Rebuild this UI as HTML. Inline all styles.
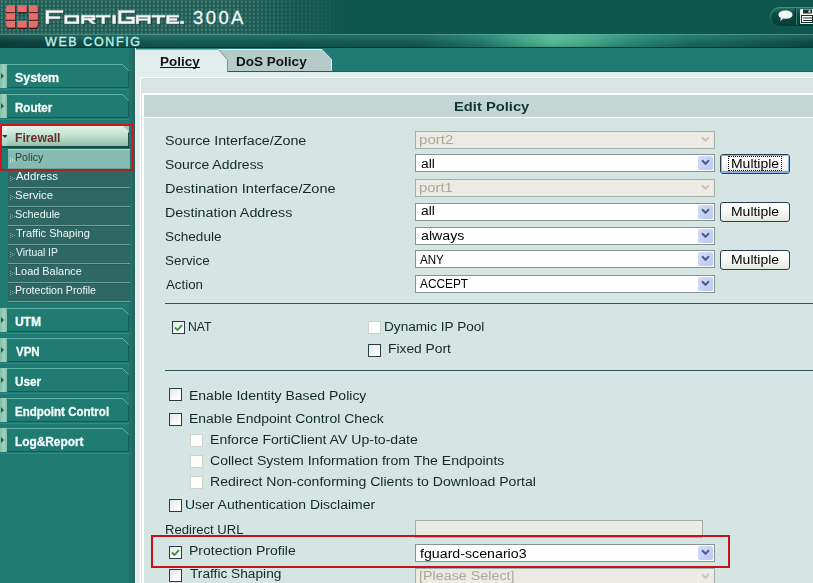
<!DOCTYPE html>
<html><head><meta charset="utf-8">
<style>
*{margin:0;padding:0;box-sizing:border-box}
html,body{width:813px;height:583px;overflow:hidden;background:#d5e5e3;font-family:"Liberation Sans",sans-serif}
.a{position:absolute}
.tx{position:absolute;white-space:nowrap;transform-origin:0 0}
#hdr{left:0;top:0;width:813px;height:34px;background:#0f564e}
#grid{left:0;top:0;width:400px;height:34px;background-color:#1d564e;
 background-image:radial-gradient(circle at 2px 2px,rgba(110,175,162,.6) 0,rgba(110,175,162,.35) 0.9px,rgba(110,175,162,0) 1.8px),linear-gradient(90deg,rgba(110,175,162,.12) 1px,transparent 1px),linear-gradient(0deg,rgba(110,175,162,.12) 1px,transparent 1px);
 background-size:4px 4px,4px 4px,4px 4px;background-position:0 0,1px 0,0 1px;
 -webkit-mask-image:linear-gradient(90deg,#000 0,#000 230px,rgba(0,0,0,.45) 290px,transparent 350px)}
#band{left:0;top:34px;width:813px;height:14px;
 background:linear-gradient(180deg,rgba(120,200,180,.2) 0,rgba(120,200,180,.1) 35%,rgba(120,200,180,0) 55%,rgba(0,0,0,.15) 100%),linear-gradient(90deg,#0c3f3a 0,#0f4741 40px,#145a52 150px,#135a52 300px,#145c54 420px,#22786a 480px,#3fa585 525px,#55b996 552px,#47ad8c 585px,#2a8a74 630px,#196d62 690px,#135a52 760px,#0f4b45 813px)}
#band .hl{position:absolute;left:0;top:0;width:813px;height:1px;background:rgba(110,190,170,.45)}
#band .dk{position:absolute;left:0;bottom:0;width:813px;height:1px;background:#0a3a35}
#side{left:0;top:48px;width:135px;height:535px;background:#1f7a74}
#sideR{left:129px;top:48px;width:6px;height:535px;background:linear-gradient(90deg,#1f7770,#226b65 70%,#2a5f5a)}
#content{left:135px;top:48px;width:678px;height:535px;background:#d5e5e3}
.btn{position:absolute;left:0;width:130px;height:24px}
.btn:after{content:"";position:absolute;left:0;top:25px;width:129px;height:1px;background:rgba(80,170,160,.35)}
.btn .strip{position:absolute;left:0;top:0;width:7px;height:24px;background:linear-gradient(90deg,#7fbea8,#9fd3bf 60%,#7fbba6)}
.btn .strip i{position:absolute;left:1px;top:9px;width:0;height:0;border-top:3px solid transparent;border-bottom:3px solid transparent;border-left:3px solid #2a5a50}
.btn svg{position:absolute;left:7px;top:0}
.sub{position:absolute;left:8px;width:122px;height:19px;background:#2f6762}
.sub .sep{position:absolute;left:0;top:0;width:122px;height:1px;background:#6aa49d}
.sub .sep:after{content:"";position:absolute;left:0;top:1px;width:122px;height:1px;background:#2a5a55}
.sub .ar{position:absolute;left:2px;top:8px}
.tab{position:absolute}
</style></head><body>
<div id="hdr" class="a"></div>
<div id="grid" class="a"></div>
<!-- logo squares -->
<svg class="a" style="left:5px;top:4px" width="36" height="26" viewBox="0 0 36 26">
 <defs><g id="lg">
  <path d="M2.5 1.5h7.5v6.5H1.2v-4z"/><path d="M12.3 1.5h9.4v6.5h-9.4z"/><path d="M24 1.5h7.5l1.3 2.5v4H24z"/>
  <path d="M1.2 9.3h8.8v6.4H1.2z"/><path d="M24 9.3h8.8v6.4H24z"/>
  <path d="M1.2 17h8.8v6.5H2.5l-1.3-2.5z"/><path d="M12.3 17h9.4v6.5h-9.4z"/><path d="M24 17h8.8v4l-1.3 2.5H24z"/>
 </g></defs>
 <use href="#lg" x="0.3" y="1" fill="#3c0e0e" stroke="#3c0e0e" stroke-width="0.9"/>
 <use href="#lg" fill="#e56d6b"/>
 <use href="#lg" fill="none" stroke="#f59a94" stroke-width="0.5" opacity=".5"/>
</svg>
<!-- FortiGate text -->
<svg class="a" style="left:44px;top:9px" width="142" height="17" viewBox="0 0 142 17">
 <g id="fg">
  <path d="M2 1.4H19V3.8H4.8V7.6H16V9.8H4.8V14.7H2Z"/>
  <path d="M20.6 6.3H35V14.7H20.6ZM23.2 8.3V12.7H32.4V8.3Z" fill-rule="evenodd"/>
  <path d="M37.3 6.3H51.1V11H47.5L51.6 14.7H48L44 11H40V14.7H37.3ZM40 8.2V9.2H48.5V8.2Z" fill-rule="evenodd"/>
  <path d="M52.1 6.3H66.4V8.3H60.6V14.7H57.9V8.3H52.1Z"/>
  <path d="M68.6 6.3H71.6V14.7H68.6Z"/>
  <path d="M74.4 1.4H90.6V3.8H77.2V12.3H88V10.2H82.5V8H90.6V14.7H74.4Z"/>
  <path d="M92.1 6.3H106.4V14.7H103.8V11.6H94.7V14.7H92.1ZM94.7 8.3V9.7H103.8V8.3Z" fill-rule="evenodd"/>
  <path d="M107.8 6.3H121.1V8.3H115.8V14.7H113.1V8.3H107.8Z"/>
  <path d="M122.6 6.3H134.9V8.3H125.2V9.6H133V11.4H125.2V12.7H134.9V14.7H122.6Z"/>
  <path d="M136.4 12.2H139.8V14.7H136.4Z"/>
 </g>
 <use href="#fg" x="0.9" y="0.9" fill="#0a2a26" stroke="#0a2a26" stroke-width="0.5" opacity=".7"/>
 <use href="#fg" fill="#f2f8f6" stroke="#f2f8f6" stroke-width="0.5"/>
</svg>
<div class="tx" style="left:193px;top:9px;font-size:18.5px;line-height:18px;color:#eef6f4;letter-spacing:2.4px;-webkit-text-stroke:0.3px #eef6f4">300A</div>

<!-- top-right pill -->
<div class="a" style="left:770px;top:7px;width:60px;height:19px;border-radius:10px 0 0 10px;background:linear-gradient(180deg,#2a7068,#0b4a42 40%,#083c36);box-shadow:inset 1px 1px 1px rgba(140,200,190,.35)"></div>
<div class="a" style="left:795px;top:8px;width:1px;height:17px;background:#062e29"></div>
<div class="a" style="left:796px;top:8px;width:1px;height:17px;background:#3d8179"></div>
<svg class="a" style="left:778px;top:10px" width="15" height="12" viewBox="0 0 15 12"><path d="M7.5 0.5C11.5 0.5 14.5 2.3 14.5 4.7S11.5 8.8 7.5 8.8C6.8 8.8 6.2 8.7 5.6 8.6L2 11 3 8C1.4 7.3 0.5 6.1 0.5 4.7 0.5 2.3 3.5 0.5 7.5 0.5z" fill="#f2f6f4"/></svg>
<svg class="a" style="left:800px;top:9px" width="13" height="15" viewBox="0 0 13 15"><path d="M0.5 0.5h13v14h-13z" fill="#f4f8f6" stroke="#dfe8e6" stroke-width="1"/><rect x="3" y="0.5" width="9" height="4" fill="#1c2e2b"/><rect x="8.5" y="1.5" width="2" height="2" fill="#f4f8f6"/><rect x="1.5" y="6.5" width="11" height="7" fill="#ffffff" stroke="#1c2e2b" stroke-width="1"/><path d="M3 9h9M3 11.5h9" stroke="#1c2e2b" stroke-width="1"/></svg>

<div id="band" class="a"><div class="hl"></div><div class="dk"></div></div>
<div class="tx" style="left:45px;top:35.6px;font-size:12.5px;line-height:12.5px;color:#bdf0e6;-webkit-text-stroke:0.35px #bdf0e6;letter-spacing:1.6px">WEB CONFIG</div>

<div id="side" class="a"></div>
<div id="sideR" class="a"></div>

<!-- main sidebar buttons -->
<div class="btn" style="top:64px"><div class="strip"><i></i></div><svg width="122" height="24"><path d="M0 0.5H115.5L121.5 6.5V23.5" fill="none" stroke="#56aba0"/><path d="M0 1H115L121 7V23H0z" fill="#207b73"/><path d="M0 0.5H115.5L121.5 6.5" fill="none" stroke="#5db3a7"/><path d="M0 23.5H121.5V7" fill="none" stroke="#185c56"/></svg></div>
<div class="btn" style="top:94px"><div class="strip"><i></i></div><svg width="122" height="24"><path d="M0 1H115L121 7V23H0z" fill="#207b73"/><path d="M0 0.5H115.5L121.5 6.5" fill="none" stroke="#5db3a7"/><path d="M0 23.5H121.5V7" fill="none" stroke="#185c56"/></svg></div>

<!-- firewall -->
<div class="a" style="left:2px;top:126px;width:6px;height:21px;background:linear-gradient(180deg,#f2fbf6,#c3e3d4 50%,#a6ccb9)"></div>
<div class="a" style="left:2px;top:135px;width:0;height:0;border-left:3px solid transparent;border-right:3px solid transparent;border-top:3px solid #223a34"></div>
<div class="a" style="left:7px;top:126px;width:122px;height:21px;background:linear-gradient(180deg,#e4f3ea 0,#c9e6d7 35%,#a6cfbb 75%,#8cbba5 100%)"></div>
<div class="a" style="left:2px;top:146px;width:127px;height:1px;background:#1b4f4a"></div><div class="a" style="left:2px;top:147px;width:128px;height:1px;background:#174a45"></div>
<div class="a" style="left:128px;top:126px;width:1px;height:21px;background:#1d4f4a"></div><svg class="a" style="left:122px;top:126px" width="7" height="7"><path d="M0 0H7V7z" fill="#9cc9b6"/><path d="M0.5 0L6.5 6" stroke="#f4fbf7" stroke-width="1"/></svg>
<!-- submenu -->
<div class="a" style="left:8px;top:148px;width:122px;height:1px;background:#2a716a"></div>
<div class="sub" style="top:149px;background:#86bbaf;border-top:1px solid #b3d8cc"><svg class="ar" width="7" height="6" viewBox="0 0 7 6"><g fill="#d8f0ea"><rect x="0" y="0" width="1" height="1"/><rect x="0" y="2" width="1" height="1"/><rect x="0" y="4" width="1" height="1"/><rect x="2" y="1" width="1" height="1"/><rect x="2" y="3" width="1" height="1"/><rect x="4" y="2" width="1" height="1"/></g></svg></div>
<div class="sub" style="top:168px"><div class="sep"></div><svg class="ar" width="7" height="6" viewBox="0 0 7 6"><g fill="#7fb3aa"><rect x="0" y="0" width="1" height="1"/><rect x="0" y="2" width="1" height="1"/><rect x="0" y="4" width="1" height="1"/><rect x="2" y="1" width="1" height="1"/><rect x="2" y="3" width="1" height="1"/><rect x="4" y="2" width="1" height="1"/></g></svg></div>
<div class="sub" style="top:187px"><div class="sep"></div><svg class="ar" width="7" height="6" viewBox="0 0 7 6"><g fill="#7fb3aa"><rect x="0" y="0" width="1" height="1"/><rect x="0" y="2" width="1" height="1"/><rect x="0" y="4" width="1" height="1"/><rect x="2" y="1" width="1" height="1"/><rect x="2" y="3" width="1" height="1"/><rect x="4" y="2" width="1" height="1"/></g></svg></div>
<div class="sub" style="top:206px"><div class="sep"></div><svg class="ar" width="7" height="6" viewBox="0 0 7 6"><g fill="#7fb3aa"><rect x="0" y="0" width="1" height="1"/><rect x="0" y="2" width="1" height="1"/><rect x="0" y="4" width="1" height="1"/><rect x="2" y="1" width="1" height="1"/><rect x="2" y="3" width="1" height="1"/><rect x="4" y="2" width="1" height="1"/></g></svg></div>
<div class="sub" style="top:225px"><div class="sep"></div><svg class="ar" width="7" height="6" viewBox="0 0 7 6"><g fill="#7fb3aa"><rect x="0" y="0" width="1" height="1"/><rect x="0" y="2" width="1" height="1"/><rect x="0" y="4" width="1" height="1"/><rect x="2" y="1" width="1" height="1"/><rect x="2" y="3" width="1" height="1"/><rect x="4" y="2" width="1" height="1"/></g></svg></div>
<div class="sub" style="top:244px"><div class="sep"></div><svg class="ar" width="7" height="6" viewBox="0 0 7 6"><g fill="#7fb3aa"><rect x="0" y="0" width="1" height="1"/><rect x="0" y="2" width="1" height="1"/><rect x="0" y="4" width="1" height="1"/><rect x="2" y="1" width="1" height="1"/><rect x="2" y="3" width="1" height="1"/><rect x="4" y="2" width="1" height="1"/></g></svg></div>
<div class="sub" style="top:263px"><div class="sep"></div><svg class="ar" width="7" height="6" viewBox="0 0 7 6"><g fill="#7fb3aa"><rect x="0" y="0" width="1" height="1"/><rect x="0" y="2" width="1" height="1"/><rect x="0" y="4" width="1" height="1"/><rect x="2" y="1" width="1" height="1"/><rect x="2" y="3" width="1" height="1"/><rect x="4" y="2" width="1" height="1"/></g></svg></div>
<div class="sub" style="top:282px"><div class="sep"></div><svg class="ar" width="7" height="6" viewBox="0 0 7 6"><g fill="#7fb3aa"><rect x="0" y="0" width="1" height="1"/><rect x="0" y="2" width="1" height="1"/><rect x="0" y="4" width="1" height="1"/><rect x="2" y="1" width="1" height="1"/><rect x="2" y="3" width="1" height="1"/><rect x="4" y="2" width="1" height="1"/></g></svg></div>
<div class="a" style="left:8px;top:301px;width:122px;height:1px;background:#6aa49d"></div><div class="a" style="left:8px;top:302px;width:122px;height:1px;background:#1f6a64"></div>

<!-- red rect sidebar -->
<div class="a" style="left:0;top:124px;width:134px;height:47px;border:2px solid #d3141a;border-bottom-color:#a52424"></div>

<!-- lower main buttons -->
<div class="btn" style="top:308px"><div class="strip"><i></i></div><svg width="122" height="24"><path d="M0 1H115L121 7V23H0z" fill="#207b73"/><path d="M0 0.5H115.5L121.5 6.5" fill="none" stroke="#5db3a7"/><path d="M0 23.5H121.5V7" fill="none" stroke="#185c56"/></svg></div>
<div class="btn" style="top:338px"><div class="strip"><i></i></div><svg width="122" height="24"><path d="M0 1H115L121 7V23H0z" fill="#207b73"/><path d="M0 0.5H115.5L121.5 6.5" fill="none" stroke="#5db3a7"/><path d="M0 23.5H121.5V7" fill="none" stroke="#185c56"/></svg></div>
<div class="btn" style="top:368px"><div class="strip"><i></i></div><svg width="122" height="24"><path d="M0 1H115L121 7V23H0z" fill="#207b73"/><path d="M0 0.5H115.5L121.5 6.5" fill="none" stroke="#5db3a7"/><path d="M0 23.5H121.5V7" fill="none" stroke="#185c56"/></svg></div>
<div class="btn" style="top:398px"><div class="strip"><i></i></div><svg width="122" height="24"><path d="M0 1H115L121 7V23H0z" fill="#207b73"/><path d="M0 0.5H115.5L121.5 6.5" fill="none" stroke="#5db3a7"/><path d="M0 23.5H121.5V7" fill="none" stroke="#185c56"/></svg></div>
<div class="btn" style="top:428px"><div class="strip"><i></i></div><svg width="122" height="24"><path d="M0 1H115L121 7V23H0z" fill="#207b73"/><path d="M0 0.5H115.5L121.5 6.5" fill="none" stroke="#5db3a7"/><path d="M0 23.5H121.5V7" fill="none" stroke="#185c56"/></svg></div>

<!-- content -->
<div id="content" class="a"></div>
<!-- tab row -->
<div class="a" style="left:135px;top:48px;width:678px;height:23px;background:#1f7a74"></div>
<div class="a" style="left:135px;top:48px;width:1px;height:535px;background:#d8f6f3"></div>
<svg class="a" style="left:136px;top:48px" width="677" height="24" viewBox="0 0 677 24">
 <path d="M0 0H677V24H0z" fill="#1f7a74"/>
 <path d="M0 1.5H82.5L91.5 11.5V24H0z" fill="#e1eeee"/>
 <path d="M82.5 2H186L195.5 12V23H91.5V11.5z" fill="#b5cbc9"/>
 <path d="M82.5 1.5L91.5 11.5V23" fill="none" stroke="#7d9694" stroke-width="1"/>
 <path d="M82.5 1.5H186L195.5 11.5V23" fill="none" stroke="#e6f2f1" stroke-width="1"/>
 <path d="M91.5 23.5H677" stroke="#1a5f58" stroke-width="1"/>
</svg>
<div class="a" style="left:160px;top:67px;width:40px;height:1px;background:#111"></div>
<!-- panel bands -->
<div class="a" style="left:136px;top:72px;width:677px;height:5px;background:#e0eeed"></div>
<div class="a" style="left:136px;top:71px;width:4px;height:512px;background:#e3eded"></div>
<div class="a" style="left:140px;top:77px;width:673px;height:1px;background:#ffffff"></div>
<div class="a" style="left:140px;top:77px;width:1px;height:506px;background:#ffffff"></div>
<div class="a" style="left:141px;top:78px;width:672px;height:15px;background:#d9e5e4"></div>
<div class="a" style="left:141px;top:78px;width:2px;height:505px;background:#d9e5e4"></div>
<div class="a" style="left:142px;top:93px;width:671px;height:2px;background:#ffffff"></div>
<div class="a" style="left:142px;top:93px;width:2px;height:490px;background:#ffffff"></div>
<div class="a" style="left:144px;top:95px;width:669px;height:22px;background:#c4d6d4"></div>
<div class="a" style="left:144px;top:117px;width:669px;height:1px;background:#ffffff"></div>
<div class="a" style="left:144px;top:118px;width:669px;height:465px;background:#d5e5e3"></div>

<div class='a' style='left:415px;top:131px;width:300px;height:18px;border:1px solid #a3adac;background:#ebeae4'></div><div class='a' style='left:698px;top:133px;width:15px;height:14px;background:#ecebe4;border-left:1px solid #f4f3ee'></div><svg class='a' style='left:701px;top:136px' width='9' height='7' viewBox='0 0 9 7'><path d='M1 1.2L4.5 4.8L8 1.2' fill='none' stroke='#c9c7bc' stroke-width='2'/></svg>
<div class='a' style='left:415px;top:154px;width:300px;height:18px;border:1px solid #87948f;background:#ffffff'></div><div class='a' style='left:698px;top:156px;width:15px;height:14px;background:linear-gradient(135deg,#d3ddf8,#b9c9f3);border-radius:2px'></div><svg class='a' style='left:701px;top:159px' width='9' height='7' viewBox='0 0 9 7'><path d='M1 1.2L4.5 4.8L8 1.2' fill='none' stroke='#4d6088' stroke-width='2'/></svg>
<div class='a' style='left:415px;top:179px;width:300px;height:18px;border:1px solid #a3adac;background:#ebeae4'></div><div class='a' style='left:698px;top:181px;width:15px;height:14px;background:#ecebe4;border-left:1px solid #f4f3ee'></div><svg class='a' style='left:701px;top:184px' width='9' height='7' viewBox='0 0 9 7'><path d='M1 1.2L4.5 4.8L8 1.2' fill='none' stroke='#c9c7bc' stroke-width='2'/></svg>
<div class='a' style='left:415px;top:203px;width:300px;height:18px;border:1px solid #87948f;background:#ffffff'></div><div class='a' style='left:698px;top:205px;width:15px;height:14px;background:linear-gradient(135deg,#d3ddf8,#b9c9f3);border-radius:2px'></div><svg class='a' style='left:701px;top:208px' width='9' height='7' viewBox='0 0 9 7'><path d='M1 1.2L4.5 4.8L8 1.2' fill='none' stroke='#4d6088' stroke-width='2'/></svg>
<div class='a' style='left:415px;top:227px;width:300px;height:18px;border:1px solid #87948f;background:#ffffff'></div><div class='a' style='left:698px;top:229px;width:15px;height:14px;background:linear-gradient(135deg,#d3ddf8,#b9c9f3);border-radius:2px'></div><svg class='a' style='left:701px;top:232px' width='9' height='7' viewBox='0 0 9 7'><path d='M1 1.2L4.5 4.8L8 1.2' fill='none' stroke='#4d6088' stroke-width='2'/></svg>
<div class='a' style='left:415px;top:250px;width:300px;height:18px;border:1px solid #87948f;background:#ffffff'></div><div class='a' style='left:698px;top:252px;width:15px;height:14px;background:linear-gradient(135deg,#d3ddf8,#b9c9f3);border-radius:2px'></div><svg class='a' style='left:701px;top:255px' width='9' height='7' viewBox='0 0 9 7'><path d='M1 1.2L4.5 4.8L8 1.2' fill='none' stroke='#4d6088' stroke-width='2'/></svg>
<div class='a' style='left:415px;top:275px;width:300px;height:18px;border:1px solid #87948f;background:#ffffff'></div><div class='a' style='left:698px;top:277px;width:15px;height:14px;background:linear-gradient(135deg,#d3ddf8,#b9c9f3);border-radius:2px'></div><svg class='a' style='left:701px;top:280px' width='9' height='7' viewBox='0 0 9 7'><path d='M1 1.2L4.5 4.8L8 1.2' fill='none' stroke='#4d6088' stroke-width='2'/></svg>
<div class='a' style='left:720px;top:154px;width:70px;height:20px;border:1px solid #2a3f4d;border-radius:3px;background:linear-gradient(180deg,#ffffff 0,#f6f6f2 50%,#eceee8 85%,#dfe3e0 100%)'></div><div class='a' style='left:721px;top:155px;width:68px;height:18px;border-radius:2px;box-shadow:inset 0 0 0 1px #8eb0e6, inset 0 -1px 0 1px #7b9fe0'></div><div class='a' style='left:728px;top:156px;width:54px;height:15px;border:1px dotted #000'></div>
<div class='a' style='left:720px;top:202px;width:70px;height:20px;border:1px solid #2a3f4d;border-radius:3px;background:linear-gradient(180deg,#ffffff 0,#f6f6f2 50%,#eceee8 85%,#dfe3e0 100%)'></div>
<div class='a' style='left:720px;top:250px;width:70px;height:20px;border:1px solid #2a3f4d;border-radius:3px;background:linear-gradient(180deg,#ffffff 0,#f6f6f2 50%,#eceee8 85%,#dfe3e0 100%)'></div>
<div class='a' style='left:165px;top:303px;width:648px;height:1px;background:#2f5957'></div>
<div class='a' style='left:165px;top:370px;width:648px;height:1px;background:#2f5957'></div>
<div class='a' style='left:172px;top:321px;width:13px;height:13px;border:1px solid #2b3d44;background:linear-gradient(135deg,#e2e6ec,#fbfbf8 70%,#ffffff)'></div><svg class='a' style='left:174px;top:324px' width='9' height='8' viewBox='0 0 9 8'><path d='M1 3.5L3.5 6L8 1.2' fill='none' stroke='#259a2c' stroke-width='1.8'/></svg>
<div class='a' style='left:368px;top:321px;width:13px;height:13px;border:1px solid #d2d2ca;background:#fdfdfb'></div>
<div class='a' style='left:368px;top:344px;width:13px;height:13px;border:1px solid #2b3d44;background:linear-gradient(135deg,#e2e6ec,#fbfbf8 70%,#ffffff)'></div>
<div class='a' style='left:169px;top:388px;width:13px;height:13px;border:1px solid #2b3d44;background:linear-gradient(135deg,#e2e6ec,#fbfbf8 70%,#ffffff)'></div>
<div class='a' style='left:169px;top:413px;width:13px;height:13px;border:1px solid #2b3d44;background:linear-gradient(135deg,#e2e6ec,#fbfbf8 70%,#ffffff)'></div>
<div class='a' style='left:190px;top:434px;width:13px;height:13px;border:1px solid #d2d2ca;background:#fdfdfb'></div>
<div class='a' style='left:190px;top:455px;width:13px;height:13px;border:1px solid #d2d2ca;background:#fdfdfb'></div>
<div class='a' style='left:190px;top:476px;width:13px;height:13px;border:1px solid #d2d2ca;background:#fdfdfb'></div>
<div class='a' style='left:169px;top:499px;width:13px;height:13px;border:1px solid #2b3d44;background:linear-gradient(135deg,#e2e6ec,#fbfbf8 70%,#ffffff)'></div>
<div class='a' style='left:415px;top:520px;width:288px;height:18px;border:1px solid #a3adac;background:#ebeae4'></div>
<div class='a' style='left:169px;top:546px;width:13px;height:13px;border:1px solid #2b3d44;background:linear-gradient(135deg,#e2e6ec,#fbfbf8 70%,#ffffff)'></div><svg class='a' style='left:171px;top:549px' width='9' height='8' viewBox='0 0 9 8'><path d='M1 3.5L3.5 6L8 1.2' fill='none' stroke='#259a2c' stroke-width='1.8'/></svg>
<div class='a' style='left:415px;top:544px;width:300px;height:18px;border:1px solid #87948f;background:#ffffff'></div><div class='a' style='left:698px;top:546px;width:15px;height:14px;background:linear-gradient(135deg,#d3ddf8,#b9c9f3);border-radius:2px'></div><svg class='a' style='left:701px;top:549px' width='9' height='7' viewBox='0 0 9 7'><path d='M1 1.2L4.5 4.8L8 1.2' fill='none' stroke='#4d6088' stroke-width='2'/></svg>
<div class='a' style='left:169px;top:569px;width:13px;height:13px;border:1px solid #2b3d44;background:linear-gradient(135deg,#e2e6ec,#fbfbf8 70%,#ffffff)'></div>
<div class='a' style='left:415px;top:568px;width:300px;height:18px;border:1px solid #a3adac;background:#ebeae4'></div><div class='a' style='left:698px;top:570px;width:15px;height:14px;background:#ecebe4;border-left:1px solid #f4f3ee'></div><svg class='a' style='left:701px;top:573px' width='9' height='7' viewBox='0 0 9 7'><path d='M1 1.2L4.5 4.8L8 1.2' fill='none' stroke='#c9c7bc' stroke-width='2'/></svg>
<div class='a' style='left:151px;top:535px;width:579px;height:33px;border:2px solid #c3141c'></div>
<div class='tx' style='left:14.87px;top:72px;font-size:12px;line-height:12px;font-weight:700;color:#f2fffb;transform:scaleX(1.0341);-webkit-text-stroke:0.3px #f2fffb;text-shadow:0 1px 0 rgba(10,60,55,.35);'>System</div>
<div class='tx' style='left:14.94px;top:102px;font-size:12px;line-height:12px;font-weight:700;color:#f2fffb;transform:scaleX(0.9632);-webkit-text-stroke:0.3px #f2fffb;text-shadow:0 1px 0 rgba(10,60,55,.35);'>Router</div>
<div class='tx' style='left:14.90px;top:316px;font-size:12px;line-height:12px;font-weight:700;color:#f2fffb;-webkit-text-stroke:0.3px #f2fffb;text-shadow:0 1px 0 rgba(10,60,55,.35);'>UTM</div>
<div class='tx' style='left:15.90px;top:346px;font-size:12px;line-height:12px;font-weight:700;color:#f2fffb;transform:scaleX(0.9583);-webkit-text-stroke:0.3px #f2fffb;text-shadow:0 1px 0 rgba(10,60,55,.35);'>VPN</div>
<div class='tx' style='left:14.92px;top:376px;font-size:12px;line-height:12px;font-weight:700;color:#f2fffb;transform:scaleX(0.9769);-webkit-text-stroke:0.3px #f2fffb;text-shadow:0 1px 0 rgba(10,60,55,.35);'>User</div>
<div class='tx' style='left:14.94px;top:406px;font-size:12px;line-height:12px;font-weight:700;color:#f2fffb;transform:scaleX(0.9604);-webkit-text-stroke:0.3px #f2fffb;text-shadow:0 1px 0 rgba(10,60,55,.35);'>Endpoint Control</div>
<div class='tx' style='left:14.91px;top:436px;font-size:12px;line-height:12px;font-weight:700;color:#f2fffb;transform:scaleX(0.9882);-webkit-text-stroke:0.3px #f2fffb;text-shadow:0 1px 0 rgba(10,60,55,.35);'>Log&amp;Report</div>
<div class='tx' style='left:14.58px;top:132px;font-size:12px;line-height:12px;font-weight:700;color:#6a2d2b;transform:scaleX(1.0186);'>Firewall</div>
<div class='tx' style='left:14.83px;top:152px;font-size:11px;line-height:11px;font-weight:400;color:#24403c;transform:scaleX(0.9679);'>Policy</div>
<div class='tx' style='left:15.80px;top:171px;font-size:11px;line-height:11px;font-weight:400;color:#eef8f5;transform:scaleX(1.0375);'>Address</div>
<div class='tx' style='left:14.76px;top:190px;font-size:11px;line-height:11px;font-weight:400;color:#eef8f5;transform:scaleX(1.0400);'>Service</div>
<div class='tx' style='left:14.82px;top:209px;font-size:11px;line-height:11px;font-weight:400;color:#eef8f5;transform:scaleX(0.9822);'>Schedule</div>
<div class='tx' style='left:15.80px;top:228px;font-size:11px;line-height:11px;font-weight:400;color:#eef8f5;transform:scaleX(1.0055);'>Traffic Shaping</div>
<div class='tx' style='left:15.80px;top:247px;font-size:11px;line-height:11px;font-weight:400;color:#eef8f5;transform:scaleX(0.9432);'>Virtual IP</div>
<div class='tx' style='left:14.81px;top:266px;font-size:11px;line-height:11px;font-weight:400;color:#eef8f5;transform:scaleX(0.9924);'>Load Balance</div>
<div class='tx' style='left:14.83px;top:285px;font-size:11px;line-height:11px;font-weight:400;color:#eef8f5;transform:scaleX(0.9675);'>Protection Profile</div>
<div class='tx' style='left:159.68px;top:56px;font-size:12px;line-height:12px;font-weight:700;color:#111;transform:scaleX(1.1235);'>Policy</div>
<div class='tx' style='left:236.27px;top:56px;font-size:12px;line-height:12px;font-weight:700;color:#111;transform:scaleX(1.1274);'>DoS Policy</div>
<div class='tx' style='left:454.37px;top:101px;font-size:12px;line-height:12px;font-weight:700;color:#0f3634;transform:scaleX(1.2267);'>Edit Policy</div>
<div class='tx' style='left:164.81px;top:135px;font-size:12px;line-height:12px;font-weight:400;color:#102a28;transform:scaleX(1.1897);'>Source Interface/Zone</div>
<div class='tx' style='left:164.84px;top:159px;font-size:12px;line-height:12px;font-weight:400;color:#102a28;transform:scaleX(1.1639);'>Source Address</div>
<div class='tx' style='left:164.79px;top:183px;font-size:12px;line-height:12px;font-weight:400;color:#102a28;transform:scaleX(1.2122);'>Destination Interface/Zone</div>
<div class='tx' style='left:164.81px;top:207px;font-size:12px;line-height:12px;font-weight:400;color:#102a28;transform:scaleX(1.1933);'>Destination Address</div>
<div class='tx' style='left:164.87px;top:231px;font-size:12px;line-height:12px;font-weight:400;color:#102a28;transform:scaleX(1.1286);'>Schedule</div>
<div class='tx' style='left:164.88px;top:255px;font-size:12px;line-height:12px;font-weight:400;color:#102a28;transform:scaleX(1.1179);'>Service</div>
<div class='tx' style='left:166.00px;top:279px;font-size:12px;line-height:12px;font-weight:400;color:#102a28;transform:scaleX(1.1061);'>Action</div>
<div class='tx' style='left:188.49px;top:321px;font-size:12px;line-height:12px;font-weight:400;color:#102a28;transform:scaleX(1.0136);'>NAT</div>
<div class='tx' style='left:383.77px;top:321px;font-size:12px;line-height:12px;font-weight:400;color:#102a28;transform:scaleX(1.1345);'>Dynamic IP Pool</div>
<div class='tx' style='left:387.65px;top:343px;font-size:12px;line-height:12px;font-weight:400;color:#102a28;transform:scaleX(1.1500);'>Fixed Port</div>
<div class='tx' style='left:188.93px;top:390px;font-size:12px;line-height:12px;font-weight:400;color:#102a28;transform:scaleX(1.1662);'>Enable Identity Based Policy</div>
<div class='tx' style='left:188.94px;top:413px;font-size:12px;line-height:12px;font-weight:400;color:#102a28;transform:scaleX(1.1627);'>Enable Endpoint Control Check</div>
<div class='tx' style='left:209.93px;top:434px;font-size:12px;line-height:12px;font-weight:400;color:#102a28;transform:scaleX(1.1722);'>Enforce FortiClient AV Up-to-date</div>
<div class='tx' style='left:209.93px;top:455px;font-size:12px;line-height:12px;font-weight:400;color:#102a28;transform:scaleX(1.1716);'>Collect System Information from The Endpoints</div>
<div class='tx' style='left:209.93px;top:476px;font-size:12px;line-height:12px;font-weight:400;color:#102a28;transform:scaleX(1.1718);'>Redirect Non-conforming Clients to Download Portal</div>
<div class='tx' style='left:185.04px;top:499px;font-size:12px;line-height:12px;font-weight:400;color:#102a28;transform:scaleX(1.1632);'>User Authentication Disclaimer</div>
<div class='tx' style='left:165.21px;top:524px;font-size:12px;line-height:12px;font-weight:400;color:#102a28;transform:scaleX(1.0901);'>Redirect URL</div>
<div class='tx' style='left:189.13px;top:545px;font-size:12px;line-height:12px;font-weight:400;color:#102a28;transform:scaleX(1.1678);'>Protection Profile</div>
<div class='tx' style='left:190.30px;top:568px;font-size:12px;line-height:12px;font-weight:400;color:#102a28;transform:scaleX(1.1418);'>Traffic Shaping</div>
<div class='tx' style='left:419.14px;top:134px;font-size:12px;line-height:12px;font-weight:400;color:#aca899;transform:scaleX(1.2577);'>port2</div>
<div class='tx' style='left:420.60px;top:158px;font-size:12px;line-height:12px;font-weight:400;color:#000;transform:scaleX(1.1455);'>all</div>
<div class='tx' style='left:419.17px;top:182px;font-size:12px;line-height:12px;font-weight:400;color:#aca899;transform:scaleX(1.2346);'>port1</div>
<div class='tx' style='left:420.60px;top:205px;font-size:12px;line-height:12px;font-weight:400;color:#000;transform:scaleX(1.1455);'>all</div>
<div class='tx' style='left:420.60px;top:230px;font-size:12px;line-height:12px;font-weight:400;color:#000;transform:scaleX(1.1833);'>always</div>
<div class='tx' style='left:420.30px;top:254px;font-size:12px;line-height:12px;font-weight:400;color:#000;transform:scaleX(0.9667);'>ANY</div>
<div class='tx' style='left:420.30px;top:278px;font-size:12px;line-height:12px;font-weight:400;color:#000;transform:scaleX(0.9878);'>ACCEPT</div>
<div class='tx' style='left:419.90px;top:548px;font-size:12px;line-height:12px;font-weight:400;color:#000;transform:scaleX(1.1833);'>fguard-scenario3</div>
<div class='tx' style='left:418.81px;top:570px;font-size:12px;line-height:12px;font-weight:400;color:#aca899;transform:scaleX(1.1936);'>[Please Select]</div>
<div class='tx' style='left:730.54px;top:158px;font-size:12px;line-height:12px;font-weight:400;color:#000;transform:scaleX(1.1625);'>Multiple</div>
<div class='tx' style='left:730.54px;top:206px;font-size:12px;line-height:12px;font-weight:400;color:#000;transform:scaleX(1.1625);'>Multiple</div>
<div class='tx' style='left:730.54px;top:254px;font-size:12px;line-height:12px;font-weight:400;color:#000;transform:scaleX(1.1625);'>Multiple</div>
</body></html>
